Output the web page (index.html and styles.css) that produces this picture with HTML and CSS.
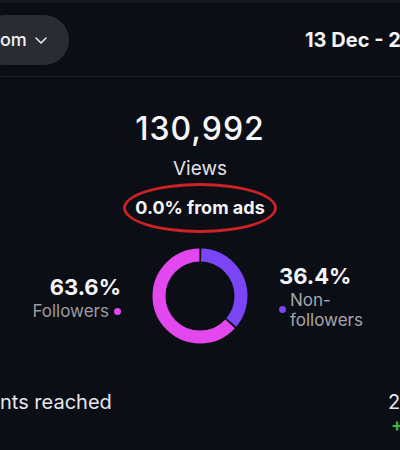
FILE: index.html
```html
<!DOCTYPE html>
<html lang="en">
<head>
<meta charset="utf-8">
<title>Insights</title>
<link rel="stylesheet" href="styles.css">
</head>
<body>
<div class="screen">
  <header class="topbar">
    <div class="pill">
      <span class="pill-text">om</span>
      <svg class="chev" width="12" height="7" viewBox="0 0 12 7"><path d="M1 1l5 5 5-5" fill="none" stroke="#e6e6ea" stroke-width="1.6" stroke-linecap="round" stroke-linejoin="round"/></svg>
    </div>
    <div class="date">13 Dec - 2</div>
  </header>

  <section class="summary">
    <div class="total">130,992</div>
    <div class="label">Views</div>
    <div class="ads"><span class="ads-text">0.0% from ads</span></div>
  </section>

  <section class="chart">
    <div class="side side-left">
      <div class="pct">63.6%</div>
      <div class="legend"><span class="legend-text">Followers</span><span class="dot dot-pink"></span></div>
    </div>
    <svg class="donut" width="96" height="96" viewBox="0 0 96 96">
      <g transform="rotate(-90 48 48)">
        <circle cx="48" cy="48" r="41" fill="none" stroke="#e347ee" stroke-width="13" stroke-dasharray="161.8 257.6" stroke-dashoffset="-94.8"/>
        <circle cx="48" cy="48" r="41" fill="none" stroke="#7b45f6" stroke-width="13" stroke-dasharray="91.8 257.6" stroke-dashoffset="-1.2"/>
      </g>
    </svg>
    <div class="side side-right">
      <div class="pct">36.4%</div>
      <div class="legend legend-right"><span class="dot dot-purple"></span><span class="legend-text wrap">Non-followers</span></div>
    </div>
  </section>

  <section class="reach">
    <div class="reach-label">nts reached</div>
    <div class="reach-value">
      <span class="reach-num">2</span>
      <span class="reach-delta">+</span>
    </div>
  </section>
</div>
</body>
</html>
```
FILE: styles.css
```css
* { box-sizing: border-box; }
html, body {
  margin: 0;
  padding: 0;
  background: #0b0e15;
}
body {
  width: 400px;
  height: 450px;
  overflow: hidden;
  font-family: "Inter", "Noto Sans", sans-serif;
  color: #f2f2f4;
}
.screen {
  width: 400px;
  height: 450px;
  overflow: hidden;
  display: flex;
  flex-direction: column;
}
.topbar {
  height: 77px;
  border-top: 3px solid #151820;
  border-bottom: 1px solid #1d2029;
  display: flex;
  align-items: center;
  flex-shrink: 0;
}
.pill {
  height: 50px;
  margin-left: -20px;
  padding: 0 22px 0 20px;
  border-radius: 25px;
  background: #2a2c33;
  display: flex;
  align-items: center;
  gap: 8px;
}
.pill-text {
  font-size: 18px;
  font-weight: 500;
  color: #f0f0f2;
}
.chev { display: block; margin-top: 1px; }
.date {
  margin-left: auto;
  width: 95px;
  white-space: nowrap;
  overflow: hidden;
  font-size: 20px;
  font-weight: 700;
  color: #f4f4f6;
}
.summary {
  display: flex;
  flex-direction: column;
  align-items: center;
  margin-top: 34px;
}
.total {
  font-size: 32px;
  line-height: 36px;
  font-weight: 500;
  letter-spacing: 1px;
  color: #f6f6f8;
}
.label {
  margin-top: 10px;
  font-size: 19px;
  line-height: 24px;
  color: #e2e2e6;
}
.ads {
  margin-top: 16px;
  position: relative;
}
.ads-text {
  display: block;
  font-size: 18px;
  line-height: 22px;
  font-weight: 700;
  color: #f4f4f6;
}
.ads::after {
  content: "";
  position: absolute;
  left: -12px;
  right: -12px;
  top: -14px;
  bottom: -14px;
  border: 3px solid #cc2126;
  border-radius: 50%;
}
.chart {
  margin-top: 29px;
  display: grid;
  grid-template-columns: 1fr auto 1fr;
  column-gap: 31px;
  align-items: center;
  height: 96px;
}
.donut { display: block; }
.side {
  display: flex;
  flex-direction: column;
}
.side-left { align-items: flex-end; margin-top: 4px; }
.side-right { align-items: flex-start; }
.pct {
  font-size: 22px;
  line-height: 26px;
  font-weight: 700;
  color: #f6f6f8;
}
.legend {
  display: flex;
  align-items: center;
  gap: 5px;
  font-size: 17px;
  line-height: 22px;
  color: #9c9ca3;
}
.legend-right {
  margin-top: 1px;
  gap: 4px;
  line-height: 20px;
  color: #a6a6ac;
}
.wrap { width: 80px; }
.dot {
  width: 7px;
  height: 7px;
  border-radius: 50%;
  flex-shrink: 0;
}
.dot-pink { background: #e347ee; }
.dot-purple { background: #7b45f6; }
.reach {
  margin-top: 46px;
  display: flex;
  justify-content: space-between;
}
.reach-label {
  font-size: 20px;
  line-height: 24px;
  color: #e6e6ea;
}
.reach-value {
  width: 12px;
  display: flex;
  flex-direction: column;
}
.reach-num {
  font-size: 20px;
  line-height: 24px;
  color: #e6e6ea;
}
.reach-delta {
  padding-left: 3px;
  font-size: 18px;
  line-height: 22px;
  font-weight: 700;
  color: #35b54a;
}
```
